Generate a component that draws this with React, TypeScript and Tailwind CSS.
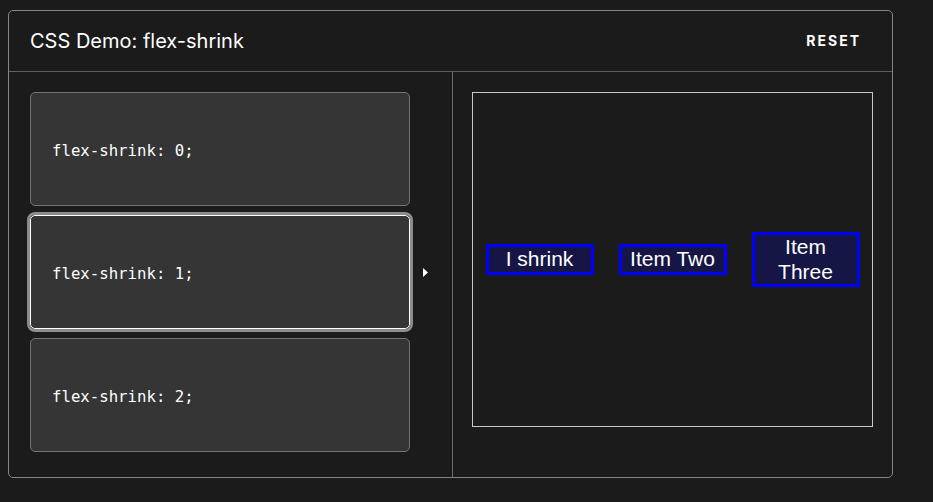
import React from "react";

const options = ["flex-shrink: 0;", "flex-shrink: 1;", "flex-shrink: 2;"];

export default function App() {
  return (
    <div className="min-h-screen w-full bg-[#1b1b1b] pt-[10px] pl-[8px]" style={{ minHeight: 502 }}>
      <div className="w-[885px] h-[468px] border border-[#858585] rounded-[5px] flex flex-col">
        <div className="h-[61px] shrink-0 flex items-center justify-between pl-[21px] pr-[31px] border-b border-[#5e5e5e]">
          <div className="text-[20px] text-white font-['Inter',sans-serif] leading-none pb-[1px]">CSS Demo: flex-shrink</div>
          <div className="text-[14px] font-bold tracking-[2px] text-white font-['Inter',sans-serif] leading-none">RESET</div>
        </div>
        <div className="flex flex-1">
          <div className="w-[444px] shrink-0 border-r border-[#6a6a6a] pl-[21px] pt-[20px] flex items-start">
            <div className="w-[380px] flex flex-col gap-[9px]">
              {options.map((o, i) => (
                <div
                  key={o}
                  className={
                    i === 1
                      ? "h-[114px] rounded-[5px] bg-[#353535] border border-white outline outline-[3px] outline-[#8c8c8c] flex items-center pl-[21px] pt-[3px]"
                      : "h-[114px] rounded-[5px] bg-[#353535] border border-[#747474] flex items-center pl-[21px] pt-[3px]"
                  }
                >
                  <span className="font-['DejaVu_Sans_Mono',monospace] text-[15.7px] text-white">{o}</span>
                </div>
              ))}
            </div>
            <div className="flex-1 h-[360px] flex items-center pl-[13px] pt-[1px]">
              <svg width="5" height="9" viewBox="0 0 5 9">
                <path d="M0 0 L5 4.5 L0 9 Z" fill="white" />
              </svg>
            </div>
          </div>
          <div className="flex-1 pl-[19px] pt-[20px]">
            <div className="w-[401px] h-[335px] border border-[#c8c8c8] flex items-center justify-around">
              {["I shrink", "Item Two", "Item Three"].map((t) => (
                <div
                  key={t}
                  className="w-[108px] px-[4px] border-[3px] border-[#0000ff] bg-[#161646] text-white text-center text-[21px] leading-[24.5px] font-['Liberation_Sans',Arial,sans-serif]"
                >
                  {t}
                </div>
              ))}
            </div>
          </div>
        </div>
      </div>
    </div>
  );
}
